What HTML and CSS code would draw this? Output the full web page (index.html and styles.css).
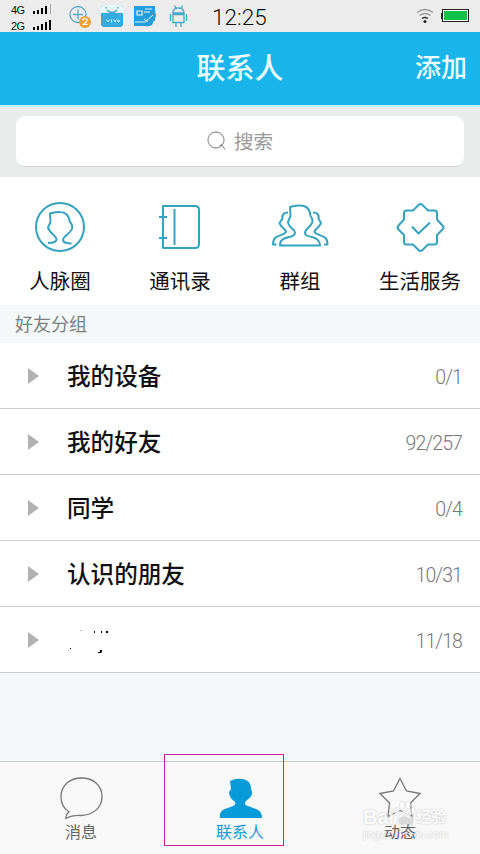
FILE: index.html
```html
<!DOCTYPE html>
<html lang="zh-CN">
<head>
  <meta charset="UTF-8" />
  <meta name="viewport" content="width=device-width, initial-scale=1.0"/>
  <title>联系人</title>
  <link rel="stylesheet" href="styles.css">
</head>
<body>

  <div class="status-bar">
    <div class="signals">
      <div class="signal">
        <span>4G</span>
        <svg width="19" height="10" viewBox="0 0 19 10"><path d="M0 7h2v3H0zM4 6h2v4H4zM8 4h2v6H8zM12 2h2v8h-2z"/><path fill="#aaa" d="M17 0h1v10h-1z"/></svg>
      </div>
      <div class="signal">
        <span>2G</span>
        <svg width="19" height="10" viewBox="0 0 19 10"><path d="M0 7h2v3H0zM4 6h2v4H4zM8 4h2v6H8zM12 2h2v8h-2zM16 0h2v10h-2z"/></svg>
      </div>
    </div>
    <svg class="apps" width="120" height="24" viewBox="0 0 120 24">
      <!-- clean up -->
      <circle cx="9" cy="10.500" r="8" fill="none" stroke="#5fa9cb" stroke-width="1.300"/>
      <path d="M9 5.500v10M4 10.500h10" stroke="#5fa9cb" stroke-width="1.300"/>
      <circle cx="16" cy="18" r="6" fill="#eea236"/>
      <path d="M13.500 16.500q.5-2 2.500-2t2 1.700q0 1.200-3.500 4.300h4" fill="none" stroke="#fff" stroke-width="1.200"/>
      <!-- store -->
      <rect x="32" y="1" width="22" height="22" rx="3" fill="#36abe2"/>
      <path d="M32 9V4q0-3 3-3h16q3 0 3 3v5z" fill="#e9f8fd"/>
      <path d="M37 3v1.500M49 3v1.500M38 6q5 5 10 0" fill="none" stroke="#3f9cc6" stroke-width="1.300"/>
      <path d="M37.500 15.500l1.500 2.500 1.500-2.500M42.500 15.500v3M44.500 15.500l1.500 2.500 1.500-2.500" fill="none" stroke="#d4f3fc"/>
      <circle cx="49.500" cy="17" r="1" fill="none" stroke="#d4f3fc"/>
      <!-- news -->
      <path d="M65 2h21v15H65z" fill="#249edb"/>
      <path d="M68 7h5v4h-5zM76 5h7M75 8h6" fill="none" stroke="#dff4fc" stroke-width="1.200"/>
      <path d="M65 15h12l9-9 1 6-4 9q-4 2-7 1H65z" fill="#249edb"/>
      <path d="M66 18h10l8-7M75 15l4 3" fill="none" stroke="#dff4fc"/>
      <!-- robot -->
      <path d="M104 9q0-5 5.500-5t5.500 5zM104 10.500h11v8h-11zM101.500 10v7M117.500 10v7M107 19v4M112 19v4M105.500 1.500l1.500 3M113.500 1.500l-1.500 3" fill="none" stroke="#48a9c6" stroke-width="1.300"/>
    </svg>
    <span class="clock">12:25</span>
    <svg class="wifi" width="18" height="16" viewBox="0 0 18 16" fill="none" stroke-width="1.300">
      <path d="M1 4.500q8-6 16 0M3.500 7.500q5.500-4 11 0" stroke="#999"/>
      <path d="M6 10.500q3-2 6 0" stroke="#333"/>
      <circle cx="9" cy="13.500" r="1.500" fill="#222"/>
    </svg>
    <svg class="battery" width="29" height="14" viewBox="0 0 29 14">
      <rect x="1.500" y=".5" width="26" height="12" fill="#fff" stroke="#222"/>
      <path d="M0 4h2v6H0z" fill="#222"/>
      <path d="M3 2h23v9H3z" fill="#0fc04b"/>
    </svg>
  </div>

  <header>
    <h1>联系人</h1>
    <a class="add" href="#">添加</a>
  </header>

  <div class="search">
    <div class="search-box">
      <svg width="19" height="20" viewBox="0 0 19 20" fill="none" stroke="#a0a0a0" stroke-width="1.300">
        <circle cx="9" cy="9" r="8"/>
        <path d="M12.500 15.500l2-2 3.500 5"/>
      </svg>
      <span>搜索</span>
    </div>
  </div>

  <div class="shortcuts">
    <div class="shortcut">
      <svg width="60" height="54" viewBox="0 0 60 54">
        <circle cx="30" cy="27" r="24"/>
        <path d="M18 43q8 0 8.500-3.500c0-4-7-6-8.500-12l2.500-5.500-.5-8.500q5-2 10-1.500c6 0 9 4 10 10q3 3 2 7c-2 5-9 7-9 11q.5 3.500 8.500 3.500"/>
      </svg>
      <span>人脉圈</span>
    </div>
    <div class="shortcut">
      <svg width="60" height="54" viewBox="0 0 60 54">
        <path d="M13 6h32q4 0 4 4v34q0 4-4 4H13zM24.500 9v36M9 17h8M9 38h8"/>
      </svg>
      <span>通讯录</span>
    </div>
    <div class="shortcut">
      <svg width="60" height="54" viewBox="0 0 60 54">
        <path d="M10 45.500q0-4 2-5.500 2-2 7-3 6-1 6-4.500c0-3-6.500-5-7-10.500l2.500-6-.5-9q5-2 10-1.500c7 0 10 4 10.500 10.500q3 4 1.500 7c-2 4-7 6.500-7 9.500 0 3 2 3.500 7 4.500q8 2 8 8.500z"/>
        <path d="M18 12.500q-6.500 0-5.500 6L9.500 23c1 4 6 6 6.500 8.500 0 3-8.500 4-11 6.500q-2 2-2 6.500h3.500M43 12.500q6.500 0 5.500 6l2.500 4.500c-1 4-6 6-6.500 8.500 0 3 8.500 4 11 6.500q2 2 2 6.500H54"/>
      </svg>
      <span>群组</span>
    </div>
    <div class="shortcut">
      <svg width="60" height="54" viewBox="0 0 60 54">
        <path d="M28.500 5q2-2 4 0l5.500 5.500h6.500q2.500 0 2.500 2.500v6.500l5.500 6q2 2 0 4L47 35v7q0 2.500-2.500 2.500H38L32.500 50q-2 2-4 0L23 44.500h-6.500Q14 44.500 14 42v-7l-5.500-5.500q-2-2 0-4l5.500-6V13q0-2.500 2.500-2.500H23zM22 26.500l6.500 7L40 22.500"/>
      </svg>
      <span>生活服务</span>
    </div>
  </div>

  <div class="section-title">好友分组</div>

  <ul class="groups">
    <li><i class="arrow"></i><span class="name">我的设备</span><span class="count">0/1</span></li>
    <li><i class="arrow"></i><span class="name">我的好友</span><span class="count">92/257</span></li>
    <li><i class="arrow"></i><span class="name">同学</span><span class="count">0/4</span></li>
    <li><i class="arrow"></i><span class="name">认识的朋友</span><span class="count">10/31</span></li>
    <li>
      <i class="arrow"></i>
      <svg class="erased" width="50" height="28" viewBox="0 0 50 28">
        <path d="M27 5h1v2h-1zM34 5h1v2h-1zM39 5h2v2h-2zM3 22h1v1H3zM31 26h2v-2h2v2l-1 1h-3z"/>
        <path fill="#bbb" d="M13 4h2v1h-2zM1 24h1v1H1z"/>
      </svg>
      <span class="count">11/18</span>
    </li>
  </ul>

  <footer class="tabs">
    <div class="tab">
      <svg width="48" height="44" viewBox="0 0 48 44">
        <path d="M13 35C7 31 5 26 5 20 5 8 14 1 25.500 1S46 8 46 19.500 37 38 25 38.500q-9-.5-15 3 0-4.500 3-6.500z"/>
      </svg>
      <span>消息</span>
    </div>
    <div class="tab active">
      <svg width="44" height="44" viewBox="0 0 44 44">
        <path d="M2 41q-1-7 5-9l8-3q3-1 2-4c-4-3-6-6-6-10l2-3-1-8q6-3 12-2c8 1 9 6 9 10 3 5 0 8-5 12-2 3-1 4 2 5l8 3q6 2 6 9z"/>
      </svg>
      <span>联系人</span>
      <div class="highlight"></div>
    </div>
    <div class="tab">
      <svg width="44" height="44" viewBox="0 0 44 44">
        <path d="M22 1.500l6.500 12.500L42 16.500 32.500 26 34 39.500l-12-6-12 6L11.500 26 2 16.500 15.500 14z"/>
      </svg>
      <span>动态</span>
      <div class="watermark">
        <div class="brand">Bai
          <svg width="22" height="28" viewBox="0 0 22 28">
            <ellipse cx="3" cy="11" rx="2.500" ry="4"/><ellipse cx="8" cy="5" rx="2.500" ry="4"/><ellipse cx="14" cy="5" rx="2.500" ry="4"/><ellipse cx="19" cy="11" rx="2" ry="4"/>
            <path d="M11 10q3 0 5 5 5 5 2 10-2 3-7 2-5 1-7-2-3-5 2-10 2-5 5-5z"/>
            <text x="5" y="24">du</text>
          </svg>
          <span>经验</span></div>
        <div class="site">jingyan.baidu.com</div>
      </div>
    </div>
  </footer>

</body>
</html>
```
FILE: styles.css
```css
* {
  box-sizing: border-box;
}
body {
  margin: 0;
  height: 854px;
  display: flex;
  flex-direction: column;
  overflow: hidden;
  font-family: 'Liberation Sans', 'Noto Sans CJK SC', sans-serif;
  background: #f4f8f8;
  color: #111;
}
svg {
  display: block;
  flex-shrink: 0;
}
.status-bar {
  height: 32px;
  display: flex;
  align-items: center;
  padding: 0 10px 0 11px;
  background: #ececec;
}
.signals {
  width: 58px;
  padding-top: 3px;
}
.signal {
  display: flex;
  align-items: center;
  height: 16px;
  font-size: 11px;
}
.signal span {
  width: 22px;
  padding-top: 1px;
  letter-spacing: -0.5px;
}
.signal svg {
  margin-top: -2px;
}
.clock {
  margin-left: 23px;
  width: 60px;
  font-family: Roboto, sans-serif;
  font-weight: 300;
  font-size: 22.5px;
  padding-top: 1px;
}
.wifi {
  margin-left: auto;
}
.battery {
  margin-left: 7px;
}
header {
  height: 75px;
  display: grid;
  grid-template-columns: 1fr auto 1fr;
  align-items: center;
  padding: 0 13px 5px;
  background: #18b4ea;
  border-bottom: 2px solid #b8f5fc;
  color: #e8feff;
}
h1 {
  grid-column: 2;
  margin: 0;
  font-size: 29px;
  font-weight: 500;
}
.add {
  justify-self: end;
  padding-bottom: 2px;
  font-size: 26px;
  font-weight: 500;
  color: #e8feff;
  text-decoration: none;
}
.search {
  height: 70px;
  padding: 9px 16px;
  background: #eaecec;
}
.search-box {
  height: 51px;
  display: flex;
  align-items: center;
  justify-content: center;
  gap: 8px;
  background: #fff;
  border-radius: 9px;
  border-bottom: 1px solid #d5d7d7;
  font-size: 19.5px;
  color: #999;
}
.search-box span {
  margin-top: -1px;
}
.shortcuts {
  height: 128px;
  display: grid;
  grid-template-columns: repeat(4, 1fr);
  background: #fff;
}
.shortcut {
  display: flex;
  flex-direction: column;
  align-items: center;
  padding-top: 23px;
  font-size: 20.5px;
}
.shortcut svg {
  fill: none;
  stroke: #35a3bf;
  stroke-width: 2;
  stroke-linejoin: round;
}
.shortcut span {
  margin-top: 13px;
  line-height: 30px;
}
.section-title {
  height: 38px;
  padding-left: 15px;
  line-height: 40px;
  font-size: 18px;
  color: #7d7f7f;
}
.groups {
  margin: 0;
  padding: 0;
  list-style: none;
  background: #fff;
}
.groups li {
  height: 66px;
  display: flex;
  align-items: center;
  padding: 0 18px 0 28px;
  border-bottom: 1px solid #cdcdcd;
}
.arrow {
  border-left: 11px solid #b2b2b2;
  border-top: 8px solid transparent;
  border-bottom: 8px solid transparent;
}
.name {
  margin-left: 28px;
  padding-bottom: 2px;
  font-size: 23.6px;
  font-weight: 500;
}
.erased {
  margin-left: 28px;
}
.count {
  margin-left: auto;
  padding-top: 3px;
  font-family: Roboto, sans-serif;
  font-weight: 300;
  font-size: 19.5px;
  letter-spacing: -0.9px;
  color: #777;
}
.tabs {
  height: 93px;
  margin-top: auto;
  display: grid;
  grid-template-columns: repeat(3, 160px);
  background: #f8f8f8;
  border-top: 1px solid #c8cccc;
}
.tab {
  position: relative;
  display: flex;
  flex-direction: column;
  align-items: center;
  padding-top: 15px;
  font-size: 16px;
  color: #666;
}
.tab svg {
  fill: none;
  stroke: #777;
  stroke-width: 1.3;
}
.tab > span {
  position: relative;
  z-index: 1;
  margin-top: 2px;
  line-height: 20px;
}
.tab:first-child > span {
  padding-left: 2px;
}
.active {
  color: #149bd3;
}
.active svg {
  fill: #079bd9;
  stroke: none;
}
.highlight {
  position: absolute;
  left: 4px;
  top: -8px;
  width: 120px;
  height: 92px;
  border: 1px solid #c4219c;
}
.watermark {
  position: absolute;
  left: 43px;
  top: 38px;
  color: #fcfcfc;
  text-shadow: 0 0 2px #aaa;
  opacity: .75;
}
.brand {
  display: flex;
  align-items: flex-end;
  font-size: 20px;
  line-height: 22px;
  font-weight: bold;
}
.tab .brand svg {
  fill: #fcfcfc;
  stroke: #ccc;
  stroke-width: .6;
}
.brand text {
  font-size: 11px;
}
.brand span {
  font-size: 15px;
}
.site {
  font-size: 10.5px;
  line-height: 12px;
}
```
